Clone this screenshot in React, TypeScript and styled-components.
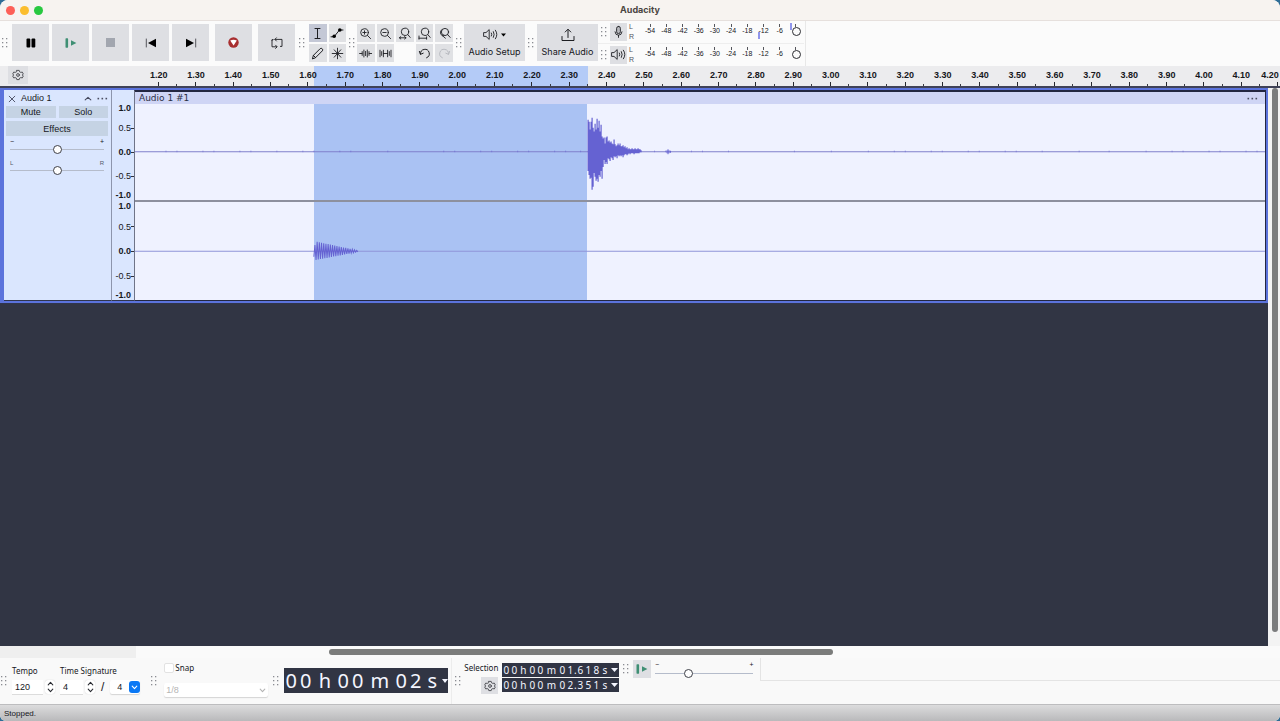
import React from 'react';
import styled, { createGlobalStyle, css } from 'styled-components';

const sans = '"Liberation Sans", Arial, sans-serif';
const system = 'Inter, "Liberation Sans", sans-serif';
const humanist = '"Noto Sans", "Open Sans", sans-serif';

const GlobalStyle = createGlobalStyle`
  *, *::before, *::after { box-sizing: border-box; }
  body { margin: 0; background: #2f6d96; font-family: ${sans}; font-size: 9px; color: #16171c; }
  button, input, select { font: inherit; color: inherit; margin: 0; padding: 0; border: 0; border-radius: 0; background: none; }
  svg { display: block; }
`;

const Window = styled.div`
  min-height: 100vh;
  display: flex;
  flex-direction: column;
  overflow: hidden;
  border-radius: 8px 8px 6px 6px;
  background: #f9f9f9;
`;

/* ---------- title bar ---------- */

const TitleBar = styled.header`
  display: grid;
  grid-template-columns: 1fr auto 1fr;
  align-items: center;
  height: 21px;
  padding: 0 6px;
  background: #f7f3f0;
  border-bottom: 1px solid #e6e0dd;
`;

const Lights = styled.div`
  display: flex;
  gap: 5px;
`;

const Light = styled.button<{ $color: string }>`
  width: 9px;
  height: 9px;
  border-radius: 50%;
  background: ${(p) => p.$color};
`;

const Title = styled.h1`
  margin: 0;
  font: 700 9px/12px ${system};
  color: #4a4542;
`;

/* ---------- toolbars ---------- */

const ToolDock = styled.div`
  display: flex;
  align-items: stretch;
  height: 45px;
  background: #fbfbfb;
`;

const ToolBar = styled.div<{ $gap?: number }>`
  display: flex;
  gap: ${(p) => p.$gap ?? 3}px;
  padding-top: 3px;
  align-items: flex-start;
`;

const GripBox = styled.span<{ $width: number; $height: number }>`
  flex: none;
  display: flex;
  align-items: center;
  justify-content: center;
  width: ${(p) => p.$width}px;
  height: ${(p) => p.$height}px;
`;

function Grip({ width = 12, height = 37 }: { width?: number; height?: number }) {
  return (
    <GripBox $width={width} $height={height} aria-hidden="true">
      <svg width="6" height="10" viewBox="0 0 6 10" fill="#8a8c92">
        {[0, 4, 8].map((y) => (
          <React.Fragment key={y}>
            <rect x="0" y={y} width="1.3" height="1.3" />
            <rect x="4" y={y} width="1.3" height="1.3" />
          </React.Fragment>
        ))}
      </svg>
    </GripBox>
  );
}

const buttonFace = css`
  display: flex;
  align-items: center;
  justify-content: center;
  background: #dedfe3;
`;

const TransportButton = styled.button<{ $apart?: boolean }>`
  ${buttonFace}
  width: 37px;
  height: 37px;
  margin-left: ${(p) => (p.$apart ? 3 : 0)}px;
`;

const SmallButton = styled.button<{ $active?: boolean }>`
  ${buttonFace}
  height: 18px;
  background: ${(p) => (p.$active ? '#c4c8d6' : '#e0e1e4')};
`;

const ToolGrid = styled.div<{ $columns: number; $width: number }>`
  display: grid;
  grid-template-columns: repeat(${(p) => p.$columns}, 1fr);
  gap: 2px;
  width: ${(p) => p.$width}px;
`;

const SetupButton = styled.button`
  ${buttonFace}
  flex-direction: column;
  justify-content: space-between;
  width: 61px;
  height: 37px;
  padding: 4px 0 3px;
  font: 400 9px/12px ${system};
  white-space: nowrap;
`;

const MeterStack = styled.div`
  display: flex;
  flex-direction: column;
  padding-right: 1px;
  border-right: 1px solid #e8e8e8;
`;

const MeterRow = styled.div`
  position: relative;
  display: flex;
  align-items: center;
  height: 22px;
  & + & { border-top: 1px solid #eeeeee; }
`;

const MeterButton = styled.button`
  ${buttonFace}
  width: 17px;
  height: 18px;
`;

const Channels = styled.span`
  display: flex;
  flex-direction: column;
  justify-content: space-between;
  width: 15px;
  height: 18px;
  padding-left: 2px;
  font-size: 7px;
  line-height: 8px;
  color: #55565c;
`;

const Scale = styled.div`
  display: grid;
  grid-template-columns: repeat(10, 1fr);
  width: 162px;
  height: 16px;
  font-size: 7px;
  line-height: 8px;
  text-align: center;
`;

const ScaleMark = styled.span`
  display: flex;
  flex-direction: column;
  align-items: center;
  height: 14px;
  &::before { content: ''; width: 1px; height: 3px; background: #55565c; }
`;

const Peak = styled.i<{ $left: number; $top: number }>`
  position: absolute;
  left: ${(p) => p.$left}px;
  top: ${(p) => p.$top}px;
  width: 2px;
  height: 7px;
  background: #8f95ec;
`;

const MeterKnob = styled.i`
  position: absolute;
  right: 3px;
  top: 6px;
  width: 9px;
  height: 9px;
  border: 1px solid #2b2c31;
  border-radius: 50%;
  background: #fbfbfb;
`;

/* ---------- timeline ---------- */

const Timeline = styled.div`
  position: relative;
  display: flex;
  height: 22px;
  background: #ececee;
  border-bottom: 2px solid #3f4257;
`;

const TimelineHead = styled.div`
  flex: none;
  position: relative;
  width: 140px;
  padding-left: 8px;
`;

const GearButton = styled.button<{ $size: number }>`
  ${buttonFace}
  width: ${(p) => p.$size}px;
  height: ${(p) => Math.min(p.$size, 18)}px;
`;

const TimelineSelection = styled.div`
  position: absolute;
  top: 0;
  bottom: 0;
  left: 134px;
  right: 15px;
  &::before {
    content: '';
    position: absolute;
    left: 15.9%;
    width: 24.2%;
    height: 100%;
    background: #b4cbf7;
  }
`;

const TimeMarks = styled.div`
  position: relative;
  flex: 1;
  display: grid;
  grid-template-columns: repeat(30, 1fr);
`;

const TimeMark = styled.span`
  display: flex;
  flex-direction: column;
  align-items: center;
  justify-content: space-between;
  padding-top: 3px;
  font-weight: 700;
  line-height: 12px;
  background: linear-gradient(#3a3b42, #3a3b42) right bottom / 1px 2px no-repeat;
  &::after { content: ''; width: 1px; height: 4px; background: #26272d; }
`;

const LastMark = styled(TimeMark)`
  position: relative;
  width: 20px;
  background: none;
  white-space: nowrap;
  overflow: hidden;
  &::after { align-self: flex-end; margin-right: 2px; }
`;

/* ---------- track ---------- */

const Workspace = styled.main`
  flex: 1;
  display: flex;
  background: #313544;
`;

const TrackList = styled.div`
  flex: 1;
  min-width: 0;
`;

const Track = styled.section`
  display: flex;
  height: 216px;
  padding: 2px 2px 2px 4px;
  background: #5b73dc;
  border-bottom: 1px solid #30354d;
`;

const TrackPanel = styled.div`
  flex: none;
  display: flex;
  flex-direction: column;
  gap: 3px;
  width: 108px;
  padding: 4px 3px 0 2px;
  background: #dae6fe;
  border-right: 1px solid #8d95ac;
  border-bottom: 1px solid #30354d;
  font-size: 9px;
`;

const TrackHeader = styled.div`
  display: flex;
  align-items: center;
  gap: 5px;
  height: 9px;
  padding: 0 0 0 2px;
`;

const TrackName = styled.h2`
  flex: 1;
  margin: 0;
  font: 400 9px/9px ${sans};
`;

const IconButton = styled.button`
  display: flex;
`;

const ButtonRow = styled.div`
  display: flex;
  gap: 3px;
`;

const PanelButton = styled.button<{ $tall?: boolean }>`
  flex: 1;
  height: ${(p) => (p.$tall ? 15 : 12)}px;
  line-height: 12px;
  background: #c5d3e4;
`;

const SliderField = styled.label`
  display: grid;
  grid-template-columns: 1fr auto;
  padding: 0 4px;
  font-size: 7px;
  line-height: 6px;
`;

const SliderGroup = styled.div`
  display: flex;
  flex-direction: column;
  gap: 6px;
`;

const Tiny = styled.span`
  font-size: 6px;
  color: #55596a;
`;

const Range = styled.input`
  grid-column: 1 / -1;
  appearance: none;
  width: 100%;
  height: 9px;
  background: linear-gradient(#b5bccb, #b5bccb) center / 100% 1px no-repeat;
  &::-webkit-slider-thumb {
    appearance: none;
    width: 9px;
    height: 9px;
    border: 1px solid #3e4048;
    border-radius: 50%;
    background: #fff;
  }
`;

const LevelRuler = styled.div`
  flex: none;
  width: 22px;
  padding-top: 12px;
  background: #dae6fe;
  border-bottom: 1px solid #30354d;
`;

const LevelChannel = styled.div`
  display: grid;
  grid-template-rows: 12px 28px 20px 28px 10px;
  align-items: center;
  & + & { grid-template-rows: 12px 29px 20px 30px 8px; }
`;

const Level = styled.span<{ $strong?: boolean; $tick?: boolean }>`
  display: flex;
  align-items: center;
  justify-content: flex-end;
  padding-right: ${(p) => (p.$tick ? 0 : 3)}px;
  font-weight: ${(p) => (p.$strong ? 700 : 400)};
  line-height: 10px;
  white-space: nowrap;
  &::after {
    content: '';
    display: ${(p) => (p.$tick ? 'block' : 'none')};
    width: 3px;
    height: 1px;
    background: #30323c;
  }
`;

const Clip = styled.div`
  flex: 1;
  min-width: 0;
  display: flex;
  flex-direction: column;
  border: 1px solid #232741;
  border-left-color: #6f7488;
  background: #eff2ff;
`;

const ClipHeader = styled.div`
  display: flex;
  align-items: center;
  justify-content: space-between;
  height: 13px;
  padding: 0 7px 0 4px;
  background: #cfd5f5;
  border-top: 1px solid #232741;
`;

const ClipName = styled.h3`
  margin: 0;
  font: 400 9px/11px "DejaVu Sans", sans-serif;
  color: #2b2e45;
`;

const ChannelView = styled.div`
  position: relative;
  flex: 32;
  & + & { flex: 33; border-top: 2px solid #8d909e; }
  &::before {
    content: '';
    position: absolute;
    top: 0;
    bottom: 0;
    left: 15.8%;
    width: 24.2%;
    background: #aac2f3;
  }
  svg { position: absolute; inset: 0; width: 100%; height: 100%; }
`;

const UPS = [32, 30, 22, 30, 34, 24, 20, 28, 22, 33, 24, 31, 20, 27, 15, 13, 14, 8, 14, 15, 10, 11, 9, 10, 8, 7, 12, 7, 5, 6, 8, 6, 8, 5, 5, 6, 4, 5, 3, 4, 2, 3, 2, 2, 3, 2, 2, 3, 2, 2, 3, 2, 2, 1];
const DOWNS = [20, 24, 28, 27, 39, 36, 22, 26, 30, 28, 31, 24, 26, 20, 28, 16, 9, 13, 11, 13, 7, 8, 10, 6, 7, 9, 5, 6, 5, 7, 4, 5, 4, 5, 4, 6, 4, 3, 3, 4, 3, 2, 3, 2, 2, 2, 3, 2, 2, 2, 2, 2, 1, 1];

const burst = UPS.map((up, i) => `M${453.5 + i} ${48 - up}V${48 + DOWNS[i]}`).join('');

const noise = Array.from({ length: 300 }, (_, i) => {
  const x = 20 + i * 3.7;
  const quiet = Math.sin(i * 12.9) * Math.cos(i * 4.1) < 0.55;
  return quiet ? '' : `M${Math.round(x)} 47.3V49`;
}).join('');

const ring = Array.from({ length: 41 }, (_, i) => {
  const size = i < 2 ? 6 : 10 * (1 - i / 43);
  return `${i ? 'L' : 'M'}${(179 + i * 1.1).toFixed(1)} ${(48.5 + (i % 2 ? -size : size * 0.9)).toFixed(1)}`;
}).join('');

/* ---------- lower part ---------- */

const VerticalScroll = styled.div`
  flex: none;
  width: 12px;
  padding: 0 2px 14px 4px;
  background: #f3f3f3;
  &::before { content: ''; display: block; height: 100%; border-radius: 3px; background: #7b7c7d; }
`;

const HorizontalScroll = styled.div`
  display: flex;
  align-items: center;
  height: 12px;
  background: linear-gradient(#efefef, #efefef) left / 136px 100% no-repeat #fafafa;
  &::before {
    content: '';
    width: 39.4%;
    height: 6px;
    margin-left: 25.7%;
    border-radius: 3px;
    background: #7b7c7b;
  }
`;

const BottomDock = styled.div`
  display: flex;
  align-items: stretch;
  height: 46px;
  background: #f9f9f9;
  font: 400 8px/10px ${humanist};
`;

const TempoBar = styled.div`
  display: flex;
  gap: 5px;
  padding: 8px 4px 0 5px;
`;

const Field = styled.div`
  display: flex;
  flex-direction: column;
  gap: 4px;
`;

const FieldRow = styled.div`
  display: flex;
  align-items: center;
  gap: 2px;
  height: 14px;
  font: 400 9px/12px ${sans};
`;

const TextInput = styled.input<{ $width: number }>`
  width: ${(p) => p.$width}px;
  height: 14px;
  padding-left: 3px;
  background: #fff;
  box-shadow: 0 1px 0 #dcdcdc;
`;

const Stepper = styled.span`
  display: flex;
  flex-direction: column;
  width: 10px;
  border-radius: 3px;
  background: #fff;
  box-shadow: 0 0 1px #bdbdbd;
`;

const Step = styled.button`
  display: flex;
  align-items: center;
  justify-content: center;
  height: 7px;
`;

const Slash = styled.span`
  padding: 0 4px;
  font-size: 12px;
`;

const SelectBox = styled.span<{ $width: number }>`
  position: relative;
  display: flex;
  width: ${(p) => p.$width}px;
  height: 14px;
  background: #fff;
  box-shadow: 0 1px 1px #d4d4d4;
  border-radius: 2px;
`;

const Select = styled.select<{ $pad: number }>`
  appearance: none;
  width: 100%;
  padding-left: ${(p) => p.$pad}px;
  opacity: 1;
  &:disabled { color: #b4b4b4; }
`;

const SelectArrow = styled.span<{ $blue?: boolean }>`
  position: absolute;
  right: 0;
  top: 1px;
  display: flex;
  align-items: center;
  justify-content: center;
  width: 11px;
  height: 12px;
  border-radius: 3px;
  pointer-events: none;
  background: ${(p) => (p.$blue ? '#0a78f5' : 'transparent')};
`;

const SnapBar = styled.div`
  display: flex;
  flex-direction: column;
  gap: 10px;
  padding-top: 4px;
`;

const SnapLabel = styled.label`
  display: flex;
  align-items: center;
  gap: 1px;
  height: 11px;
`;

const CheckBox = styled.input`
  appearance: none;
  width: 10px;
  height: 10px;
  background: #fff;
  border: 1px solid #e2e2e2;
  border-radius: 2px;
`;

const Clock = styled.div<{ $big?: boolean }>`
  display: flex;
  align-items: center;
  background: #313544;
  color: #f4f6ff;
  text-align: center;
  ${(p) =>
    p.$big
      ? css`width: 164px; height: 25px; margin-top: 10px; font-size: 20px; line-height: 25px;`
      : css`width: 117px; height: 14px; font-size: 10px; line-height: 14px;`}
`;

const Cell = styled.span<{ $width: number }>`
  flex: none;
  display: flex;
  align-items: center;
  justify-content: center;
  width: ${(p) => p.$width}px;
`;

const SelectionBar = styled.div`
  display: flex;
  gap: 4px;
  padding-top: 5px;
`;

const SelectionHead = styled.div`
  display: flex;
  flex-direction: column;
  align-items: flex-end;
  gap: 4px;
`;

const ClockStack = styled.div`
  display: flex;
  flex-direction: column;
  gap: 1px;
`;

const Divided = styled.div`
  display: flex;
  border-left: 1px solid #ececec;
  margin-left: 3px;
`;

const SpeedBar = styled.div`
  display: flex;
  gap: 4px;
  height: 23px;
  padding: 2px 7px 0 0;
  border-right: 1px solid #e4e4e4;
`;

const SpeedFill = styled.div`
  flex: 1;
  height: 23px;
  border-bottom: 1px solid #e4e4e4;
`;

const SpeedSlider = styled(SliderField)`
  width: 98px;
  padding: 2px 0 0;
  height: 18px;
`;

const StatusBar = styled.footer`
  height: 17px;
  padding: 3px 4px 0;
  font-size: 8px;
  line-height: 11px;
  border-top: 1px solid #bdbdbf;
  background: linear-gradient(#dcdcdd, #b9b9bb);
`;

/* ---------- icons ---------- */

function Icon({ w, h = w, children, stroke = 1 }: { w: number; h?: number; stroke?: number; children: React.ReactNode }) {
  return (
    <svg width={w} height={h} viewBox={`0 0 ${w} ${h}`} fill="none" stroke="#1d1e22" strokeWidth={stroke} strokeLinecap="round" strokeLinejoin="round" aria-hidden="true">
      {children}
    </svg>
  );
}

const PauseIcon = () => (
  <Icon w={10}>
    <rect x="0.5" y="0.5" width="3.8" height="9" rx="1" fill="#000" stroke="none" />
    <rect x="5.5" y="0.5" width="3.8" height="9" rx="1" fill="#000" stroke="none" />
  </Icon>
);
const PlayIcon = () => (
  <Icon w={12} h={10}>
    <rect x="0.5" y="0.3" width="2.6" height="9.4" rx="0.6" fill="#3f8f74" stroke="none" />
    <path d="M6 2.2 11.4 5 6 7.8Z" fill="#3f8f74" stroke="none" />
  </Icon>
);
const SkipIcon = ({ forward }: { forward?: boolean }) => (
  <Icon w={12} h={10}>
    <g transform={forward ? 'matrix(-1 0 0 1 12 0)' : undefined}>
      <path d="M1.3 1V9" stroke="#55565c" />
      <path d="M11 .8V9.2L3 5Z" fill="#000" stroke="none" />
    </g>
  </Icon>
);
const RecordIcon = () => (
  <Icon w={11}>
    <circle cx="5.5" cy="5.5" r="5.2" fill="#a82f30" stroke="none" />
    <path d="M2.2 3.6Q5.5 1.8 8.8 3.6L5.6 8.6Z" fill="#fff" stroke="none" />
  </Icon>
);
const LoopIcon = () => (
  <Icon w={12} stroke={0.9}>
    <path d="M1 3.4V9.8H5.6M1 3.4V2.6H2.2M4 2.4H11V9.4H9.4M5.4.8 3.9 2.4 5.4 4M4.6 8.2 6.2 9.8 4.6 11.4" />
  </Icon>
);
const IBeam = () => (
  <Icon w={9} h={13}>
    <path d="M2 1.5H7M4.5 1.5V11.5M2 11.5H7" />
  </Icon>
);
const Envelope = () => (
  <Icon w={14} h={12}>
    <path d="M1 9.8H4L9.5 3H13" />
    <circle cx="4.2" cy="9.2" r="1.8" fill="#000" stroke="none" />
    <circle cx="9.8" cy="3" r="1.8" fill="#000" stroke="none" />
  </Icon>
);
const Pencil = () => (
  <Icon w={13}>
    <path d="M1.5 11.5 2.4 8.4 9.2 1.6Q10.2.8 11.2 1.8T11.4 3.8L4.6 10.6ZM2.4 8.4 4.6 10.6" />
  </Icon>
);
const Star = () => (
  <Icon w={13}>
    <path d="M6.5 1.2V11.8M1.2 6.5H11.8M3.2 2.8 9.8 10.2M9.8 2.8 3.2 10.2" strokeWidth="0.9" />
  </Icon>
);
const Magnifier = ({ kind }: { kind: 'in' | 'out' | 'sel' | 'fit' | 'toggle' }) => {
  if (kind === 'in' || kind === 'out') {
    return (
      <Icon w={13} stroke={0.9}>
        <circle cx="5.5" cy="5.5" r="3.8" />
        <path d="M8.4 8.4 11.6 11.6M3.8 5.5H7.2" />
        {kind === 'in' && <path d="M5.5 3.8V7.2" />}
      </Icon>
    );
  }
  if (kind === 'toggle') {
    return (
      <Icon w={13} stroke={0.9}>
        <circle cx="7" cy="5" r="3.6" />
        <path d="M9.6 7.6 12.2 10.4M3.9 2.6A3.6 3.6 0 0 0 4.6 8.8L7.4 11.2M4.4 8.8 5.8 8" />
      </Icon>
    );
  }
  return (
    <Icon w={13} stroke={0.9}>
      <circle cx="7" cy="4.8" r="3.7" />
      <path d="M9.8 7.6 12.2 10.4" />
      {kind === 'sel' && <path d="M1.4 10.8H8M2.8 9.6 1.4 10.8 2.8 12M6.6 9.6 8 10.8 6.6 12" />}
      {kind === 'fit' && <path d="M1 9V12.2M1 11.2H8.6M8.6 9.8V12.2" />}
    </Icon>
  );
};
const Trim = ({ silence }: { silence?: boolean }) => (
  <Icon w={13} h={11} stroke={0.9}>
    {silence ? (
      <path d="M1 2.2V8.8M2.7 3.6V7.4M4.4 2.2V8.8M4.4 5.5H8.6M8.6 2.2V8.8M10.3 3.6V7.4M12 2.2V8.8" />
    ) : (
      <path d="M.6 5.5H3M3.2 3.6V7.4M4.9 2V9M6.6 3.4V7.6M8.3 2V9M10 3.6V7.4M10.2 5.5H12.6" />
    )}
  </Icon>
);
const Undo = ({ redo }: { redo?: boolean }) => (
  <Icon w={13}>
    <g transform={redo ? 'matrix(-1 0 0 1 13 0)' : undefined} stroke={redo ? '#b9bbc1' : undefined}>
      <path d="M1.4 4.4 2.4 7.4 5.2 6.2M2.5 7A4.4 4.4 0 1 1 8.6 10.8" />
    </g>
  </Icon>
);
const Speaker = () => (
  <Icon w={15} h={13} stroke={0.9}>
    <path d="M1 4.6H3L6.2 1.6V11.4L3 8.4H1ZM8.4 5Q9.2 6.5 8.4 8M10.4 3.6Q12 6.5 10.4 9.4M12.4 2.2Q15.4 6.5 12.4 10.8" />
  </Icon>
);
const Share = () => (
  <Icon w={14}>
    <path d="M1 8.5V12.5H13V8.5M7 9.5V1.5M4.2 4 7 1.2 9.8 4" />
  </Icon>
);
const Mic = () => (
  <Icon w={11} h={14} stroke={0.9}>
    <rect x="3.6" y="1.4" width="3.8" height="7.2" rx="1.9" fill="#b7b8bd" />
    <path d="M2 6.8Q2.2 10.2 5.5 10.2T9 6.8M5.5 10.4V12.4" />
  </Icon>
);
const Gear = () => (
  <Icon w={12} stroke={0.9}>
    <path d="M4.8 1.4H7.2L7.6 2.8 8.8 3.4 10.3 3.1 11.3 4.9 10.3 6 11.3 7.1 10.3 8.9 8.8 8.6 7.6 9.2 7.2 10.6H4.8L4.4 9.2 3.2 8.6 1.7 8.9.7 7.1 1.7 6 .7 4.9 1.7 3.1 3.2 3.4 4.4 2.8Z" stroke="#44454b" />
    <circle cx="6" cy="6" r="1.4" stroke="#44454b" />
  </Icon>
);
const Chevron = ({ up, color = '#2b2d33', w = 7 }: { up?: boolean; color?: string; w?: number }) => (
  <Icon w={w} h={5} stroke={1.1}>
    <path d={up ? `M1.2 3.8 ${w / 2} 1.4 ${w - 1.2} 3.8` : `M1.2 1.2 ${w / 2} 3.6 ${w - 1.2} 1.2`} stroke={color} />
  </Icon>
);
const Caret = ({ w, color = '#f4f6ff' }: { w: number; color?: string }) => (
  <svg width={w} height="4" viewBox="0 0 8 4" preserveAspectRatio="none" fill={color} aria-hidden="true">
    <path d="M0 0H8L4 4Z" />
  </svg>
);
const Dots = () => (
  <svg width="11" height="3" viewBox="0 0 11 3" fill="#4b4e62" aria-hidden="true">
    <rect x="0.5" y="0.8" width="1.6" height="1.6" />
    <rect x="4.5" y="0.8" width="1.6" height="1.6" />
    <rect x="8.5" y="0.8" width="1.6" height="1.6" />
  </svg>
);

/* ---------- composed parts ---------- */

function Meter({ name, icon, children }: { name: string; icon: React.ReactNode; children?: React.ReactNode }) {
  return (
    <MeterRow>
      <Grip height={18} />
      <MeterButton aria-label={name}>{icon}</MeterButton>
      <Channels>
        <span>L</span>
        <span>R</span>
      </Channels>
      <Scale>
        {[-54, -48, -42, -36, -30, -24, -18, -12, -6, 0].map((v) => (
          <ScaleMark key={v}>{v}</ScaleMark>
        ))}
      </Scale>
      {children}
      <MeterKnob />
    </MeterRow>
  );
}

function Levels() {
  return (
    <LevelChannel>
      <Level $strong>1.0</Level>
      <Level $tick>0.5</Level>
      <Level $strong $tick>0.0</Level>
      <Level $tick>-0.5</Level>
      <Level $strong>-1.0</Level>
    </LevelChannel>
  );
}

const BIG_CELLS = [14, 15, 23, 14, 15, 29, 14, 15, 18];
const SMALL_CELLS = [8, 8, 10, 8, 8, 14, 8, 8, 2, 8, 8, 8, 9];

function TimeField({ text, big, label }: { text: string; big?: boolean; label: string }) {
  const widths = big ? BIG_CELLS : SMALL_CELLS;
  return (
    <Clock $big={big} role="group" aria-label={label}>
      {[...text].map((c, i) => (
        <Cell key={i} $width={widths[i]}>{c}</Cell>
      ))}
      <Cell $width={big ? 7 : 10}>
        <Caret w={big ? 6 : 7} />
      </Cell>
    </Clock>
  );
}

function Steps({ name }: { name: string }) {
  return (
    <Stepper>
      <Step aria-label={`Increase ${name}`}><Chevron up /></Step>
      <Step aria-label={`Decrease ${name}`}><Chevron /></Step>
    </Stepper>
  );
}

const TIMES = Array.from({ length: 30 }, (_, i) => (1.2 + i * 0.1).toFixed(2));

export default function App() {
  return (
    <>
      <GlobalStyle />
      <Window>
        <TitleBar>
          <Lights>
            <Light $color="#fd5f57" aria-label="Close" />
            <Light $color="#fbbd2e" aria-label="Minimize" />
            <Light $color="#28c840" aria-label="Zoom" />
          </Lights>
          <Title>Audacity</Title>
        </TitleBar>

        <ToolDock>
          <ToolBar>
            <Grip width={9} />
            <TransportButton aria-label="Pause"><PauseIcon /></TransportButton>
            <TransportButton aria-label="Play"><PlayIcon /></TransportButton>
            <TransportButton aria-label="Stop">
              <Icon w={9}><rect width="9" height="9" fill="#a2a6af" stroke="none" /></Icon>
            </TransportButton>
            <TransportButton aria-label="Skip to start"><SkipIcon /></TransportButton>
            <TransportButton aria-label="Skip to end"><SkipIcon forward /></TransportButton>
            <TransportButton $apart aria-label="Record"><RecordIcon /></TransportButton>
            <TransportButton $apart aria-label="Loop"><LoopIcon /></TransportButton>
          </ToolBar>
          <ToolBar $gap={0}>
            <Grip width={14} />
            <ToolGrid $columns={2} $width={37}>
              <SmallButton $active aria-label="Selection tool"><IBeam /></SmallButton>
              <SmallButton aria-label="Envelope tool"><Envelope /></SmallButton>
              <SmallButton aria-label="Draw tool"><Pencil /></SmallButton>
              <SmallButton aria-label="Multi-tool"><Star /></SmallButton>
            </ToolGrid>
            <Grip width={11} />
            <ToolGrid $columns={5} $width={96}>
              <SmallButton aria-label="Zoom in"><Magnifier kind="in" /></SmallButton>
              <SmallButton aria-label="Zoom out"><Magnifier kind="out" /></SmallButton>
              <SmallButton aria-label="Fit selection"><Magnifier kind="sel" /></SmallButton>
              <SmallButton aria-label="Fit project"><Magnifier kind="fit" /></SmallButton>
              <SmallButton aria-label="Zoom toggle"><Magnifier kind="toggle" /></SmallButton>
              <SmallButton aria-label="Trim"><Trim /></SmallButton>
              <SmallButton aria-label="Silence"><Trim silence /></SmallButton>
              <span />
              <SmallButton aria-label="Undo"><Undo /></SmallButton>
              <SmallButton aria-label="Redo"><Undo redo /></SmallButton>
            </ToolGrid>
            <Grip width={11} />
            <SetupButton>
              <ButtonRow>
                <Speaker />
                <Icon w={5} h={13}><path d="M0 5.5H5L2.5 8.5Z" fill="#000" stroke="none" /></Icon>
              </ButtonRow>
              Audio Setup
            </SetupButton>
            <Grip width={12} />
            <SetupButton><Share />Share Audio</SetupButton>
          </ToolBar>
          <MeterStack>
            <Meter name="Record meter" icon={<Mic />}>
              <Peak $left={160} $top={11} />
              <Peak $left={192} $top={2} />
            </Meter>
            <Meter name="Playback meter" icon={<Speaker />} />
          </MeterStack>
        </ToolDock>

        <Timeline>
          <TimelineSelection />
          <TimelineHead>
            <GearButton $size={20} aria-label="Timeline options"><Gear /></GearButton>
          </TimelineHead>
          <TimeMarks>
            {TIMES.map((t) => <TimeMark key={t}>{t}</TimeMark>)}
          </TimeMarks>
          <LastMark>4.20</LastMark>
        </Timeline>

        <Workspace>
          <TrackList>
            <Track>
              <TrackPanel>
                <TrackHeader>
                  <IconButton aria-label="Remove track">
                    <Icon w={8} stroke={0.9}><path d="M1.2 1.2 6.8 6.8M6.8 1.2 1.2 6.8" stroke="#44475c" /></Icon>
                  </IconButton>
                  <TrackName>Audio 1</TrackName>
                  <IconButton aria-label="Collapse track"><Chevron up w={8} color="#44475c" /></IconButton>
                  <IconButton aria-label="Track menu"><Dots /></IconButton>
                </TrackHeader>
                <ButtonRow>
                  <PanelButton>Mute</PanelButton>
                  <PanelButton>Solo</PanelButton>
                </ButtonRow>
                <ButtonRow>
                  <PanelButton $tall>Effects</PanelButton>
                </ButtonRow>
                <SliderGroup>
                  <SliderField>
                    <span>−</span>
                    <span>+</span>
                    <Range type="range" defaultValue={50} aria-label="Gain" />
                  </SliderField>
                  <SliderField>
                    <Tiny>L</Tiny>
                    <Tiny>R</Tiny>
                    <Range type="range" defaultValue={50} aria-label="Pan" />
                  </SliderField>
                </SliderGroup>
              </TrackPanel>
              <LevelRuler>
                <Levels />
                <Levels />
              </LevelRuler>
              <Clip>
                <ClipHeader>
                  <ClipName>Audio 1 #1</ClipName>
                  <IconButton aria-label="Clip menu"><Dots /></IconButton>
                </ClipHeader>
                <ChannelView>
                  <svg viewBox="0 0 1131 97" preserveAspectRatio="none" stroke="#6562d2" fill="none" aria-hidden="true">
                    <path d="M0 48.5H1131" stroke="#7f80cb" />
                    <path d={noise} strokeWidth="1" opacity="0.5" />
                    <path d={burst} strokeWidth="1.2" />
                    <path d="M533.5 46V51M532.5 47V50M534.5 47V50M536 47.5V49.5" />
                  </svg>
                </ChannelView>
                <ChannelView>
                  <svg viewBox="0 0 1131 97" preserveAspectRatio="none" stroke="#6562d2" fill="none" aria-hidden="true">
                    <path d="M0 48.5H1131" stroke="#8f95d8" />
                    <path d={ring} />
                  </svg>
                </ChannelView>
              </Clip>
            </Track>
          </TrackList>
          <VerticalScroll />
        </Workspace>
        <HorizontalScroll />

        <BottomDock>
          <Grip width={7} height={46} />
          <TempoBar>
            <Field>
              <label htmlFor="tempo">Tempo</label>
              <FieldRow>
                <TextInput id="tempo" $width={31} defaultValue="120" />
                <Steps name="tempo" />
              </FieldRow>
            </Field>
            <Field>
              <label htmlFor="beats">Time Signature</label>
              <FieldRow>
                <TextInput id="beats" $width={23} defaultValue="4" />
                <Steps name="beats" />
                <Slash>/</Slash>
                <SelectBox $width={30}>
                  <Select $pad={7} aria-label="Beat unit" defaultValue="4">
                    <option>4</option>
                  </Select>
                  <SelectArrow $blue><Chevron color="#fff" /></SelectArrow>
                </SelectBox>
              </FieldRow>
            </Field>
          </TempoBar>
          <Grip width={20} height={46} />
          <SnapBar>
            <SnapLabel><CheckBox type="checkbox" />Snap</SnapLabel>
            <FieldRow>
              <SelectBox $width={104}>
                <Select $pad={2} aria-label="Snap to" disabled defaultValue="1/8">
                  <option>1/8</option>
                </Select>
                <SelectArrow><Chevron color="#b4b4b4" /></SelectArrow>
              </SelectBox>
            </FieldRow>
          </SnapBar>
          <Grip width={16} height={46} />
          <TimeField big text="00h00m02s" label="Audio position" />
          <Divided>
            <Grip width={12} height={46} />
            <SelectionBar>
              <SelectionHead>
                <span>Selection</span>
                <GearButton $size={17} aria-label="Selection options"><Gear /></GearButton>
              </SelectionHead>
              <ClockStack>
                <TimeField text="00h00m01.618s" label="Selection start" />
                <TimeField text="00h00m02.351s" label="Selection end" />
              </ClockStack>
            </SelectionBar>
          </Divided>
          <Grip width={14} height={22} />
          <SpeedBar>
            <GearButton $size={18} aria-label="Play at speed"><PlayIcon /></GearButton>
            <SpeedSlider>
              <span>−</span>
              <span>+</span>
              <Range type="range" defaultValue={32} aria-label="Playback speed" />
            </SpeedSlider>
          </SpeedBar>
          <SpeedFill />
        </BottomDock>
        <StatusBar>Stopped.</StatusBar>
      </Window>
    </>
  );
}
